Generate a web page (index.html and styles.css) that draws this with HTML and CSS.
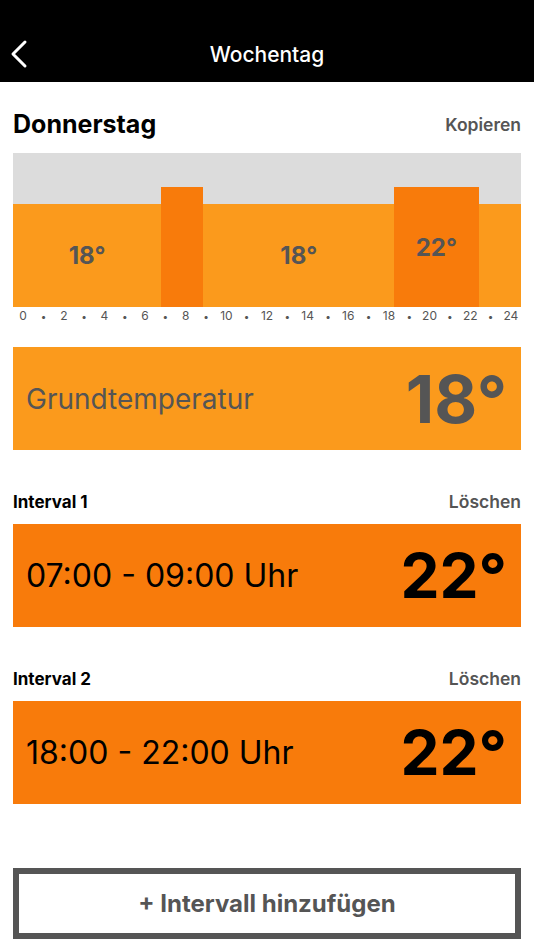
FILE: index.html
```html
<!DOCTYPE html>
<html>
  <head>
    <title>Wochentag</title>
    <meta charset="utf-8">
    <link rel="stylesheet" href="styles.css">
  </head>
  <body>
    <header class="topbar">
      <button class="back" aria-label="Zurück">
        <svg width="20" height="30" viewBox="0 0 20 30">
          <polyline points="15,3 3,15 15,27" fill="none" stroke="#fff" stroke-width="3" stroke-linecap="round" stroke-linejoin="round"/>
        </svg>
      </button>
      <h1 class="topbar__title">Wochentag</h1>
    </header>

    <main class="content">
      <div class="section-head">
        <h2 class="day-title">Donnerstag</h2>
        <span class="action">Kopieren</span>
      </div>

      <!-- day chart: 24h over the full width -->
      <div class="chart">
        <div class="chart__base"></div>
        <div class="chart__label" style="left: 0%; width: 29.17%;">18°</div>
        <div class="chart__label" style="left: 37.5%; width: 37.5%;">18°</div>
        <div class="chart__bar" style="left: 29.17%; width: 8.33%;"></div>
        <div class="chart__bar" style="left: 75%; width: 16.67%;">22°</div>
      </div>
      <div class="axis">
        <span>0</span><i>•</i><span>2</span><i>•</i><span>4</span><i>•</i><span>6</span><i>•</i>
        <span>8</span><i>•</i><span>10</span><i>•</i><span>12</span><i>•</i><span>14</span><i>•</i>
        <span>16</span><i>•</i><span>18</span><i>•</i><span>20</span><i>•</i><span>22</span><i>•</i><span>24</span>
      </div>

      <div class="card card--base">
        <span class="card__text">Grundtemperatur</span>
        <span class="card__temp">18°</span>
      </div>

      <div class="section-head section-head--interval">
        <h3 class="interval-title">Interval 1</h3>
        <span class="action">Löschen</span>
      </div>
      <div class="card card--interval">
        <span class="card__text">07:00 - 09:00 Uhr</span>
        <span class="card__temp">22°</span>
      </div>

      <div class="section-head section-head--interval">
        <h3 class="interval-title">Interval 2</h3>
        <span class="action">Löschen</span>
      </div>
      <div class="card card--interval">
        <span class="card__text">18:00 - 22:00 Uhr</span>
        <span class="card__temp">22°</span>
      </div>

      <button class="add-button">+ Intervall hinzufügen</button>
    </main>
  </body>
</html>
```

FILE: styles.css
```css
/* Base */
body {
  margin: 0;
  background-color: #ffffff;
  font-family: Inter, "Noto Sans", sans-serif;
  color: #000000;
}

/* Top bar */
.topbar {
  height: 82px;
  background-color: #000000;
  display: flex;
  align-items: flex-end;
  justify-content: center;
  position: relative;
}

.topbar__title {
  margin: 0 0 13px;
  font-size: 21px;
  font-weight: 500;
  color: #ffffff;
  line-height: 28px;
}

.back {
  position: absolute;
  left: 10px;
  top: 39px;
  padding: 0;
  border: none;
  background: none;
}

.back svg {
  display: block;
}

/* Content */
.content {
  padding: 0 13px;
}

.section-head {
  display: flex;
  justify-content: space-between;
  align-items: flex-end;
  height: 71px;
  padding-bottom: 14px;
  box-sizing: border-box;
}

.section-head--interval {
  height: 74px;
  padding-bottom: 11px;
}

.day-title {
  margin: 0;
  font-size: 25px;
  font-weight: 700;
  line-height: 30px;
}

.interval-title {
  margin: 0;
  font-size: 17px;
  font-weight: 700;
  line-height: 22px;
}

.action {
  font-size: 17.5px;
  font-weight: 600;
  color: #555555;
  line-height: 22px;
}

.section-head:first-child .action {
  margin-bottom: 3px;
}

/* Chart */
.chart {
  position: relative;
  height: 154px;
  background-color: #dcdcdc;
}

.chart__base {
  position: absolute;
  left: 0;
  right: 0;
  bottom: 0;
  height: 103px;
  background-color: #fb9a1c;
}

.chart__bar {
  position: absolute;
  bottom: 0;
  height: 120px;
  background-color: #f87b0b;
  display: flex;
  align-items: center;
  justify-content: center;
  font-size: 24px;
  font-weight: 700;
  color: #555555;
}

.chart__label {
  position: absolute;
  bottom: 0;
  height: 103px;
  display: flex;
  align-items: center;
  justify-content: center;
  font-size: 24px;
  font-weight: 700;
  color: #555555;
}

.axis {
  display: grid;
  grid-template-columns: repeat(25, 1fr);
  height: 18px;
  margin-bottom: 22px;
  font-size: 12px;
  color: #555555;
  line-height: 18px;
  text-align: center;
}

.axis i {
  font-style: normal;
  font-size: 10px;
}

/* Cards */
.card {
  height: 103px;
  display: flex;
  align-items: center;
  justify-content: space-between;
  padding: 0 14px 0 13px;
  box-sizing: border-box;
}

.card--base {
  background-color: #fb9a1c;
  color: #555555;
}

.card--interval {
  background-color: #f87b0b;
  color: #000000;
}

.card--base .card__text {
  font-size: 28px;
  font-weight: 400;
}

.card--interval .card__text {
  font-size: 32px;
  font-weight: 400;
}

.card__temp {
  font-size: 66px;
  font-weight: 700;
  line-height: 1;
}

.card--interval .card__temp {
  font-size: 62px;
}

/* Add button */
.add-button {
  display: block;
  width: 100%;
  height: 71px;
  margin-top: 64px;
  border: 6px solid #555555;
  background-color: #ffffff;
  font-family: inherit;
  font-size: 24px;
  font-weight: 700;
  color: #555555;
}
```
